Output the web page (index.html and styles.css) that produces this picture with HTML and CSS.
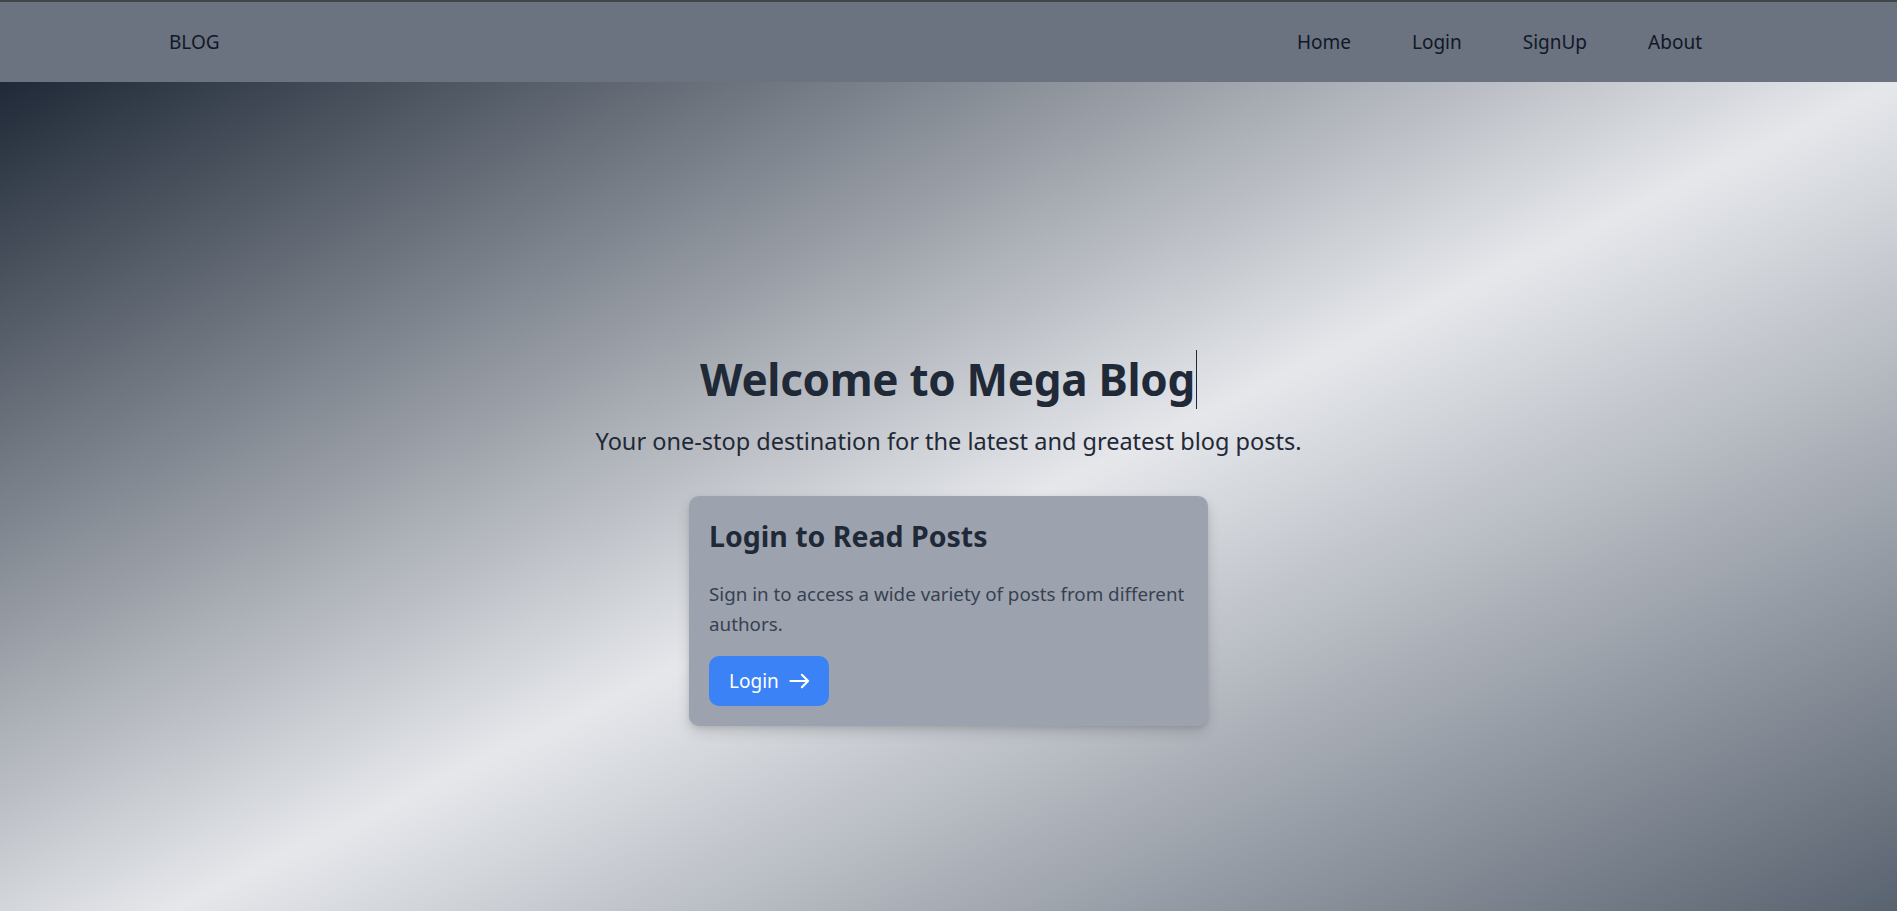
FILE: index.html
```html
<!DOCTYPE html>
<html lang="en">
<head>
<meta charset="utf-8">
<title>Mega Blog</title>
<link rel="stylesheet" href="styles.css">
</head>
<body>
<header class="nav">
  <a class="brand" href="#">BLOG</a>
  <ul class="links">
    <li><a href="#">Home</a></li>
    <li><a href="#">Login</a></li>
    <li><a href="#">SignUp</a></li>
    <li><a href="#">About</a></li>
  </ul>
</header>
<main class="hero">
  <h1 class="title"><span class="typed">Welcome to Mega Blog</span></h1>
  <p class="subtitle">Your one-stop destination for the latest and greatest blog posts.</p>
  <section class="card">
    <h2 class="card-title">Login to Read Posts</h2>
    <p class="card-text">Sign in to access a wide variety of posts from different authors.</p>
    <a class="btn" href="#">Login
      <svg class="arrow" viewBox="0 0 22 16" width="21" height="16" fill="none" stroke="currentColor" stroke-width="2.3" stroke-linecap="round" stroke-linejoin="round"><path d="M1.5 8H20M13.5 1.5 20 8l-6.5 6.5"/></svg>
    </a>
  </section>
</main>
</body>
</html>
```

FILE: styles.css
```css
* { box-sizing: border-box; }
html, body { margin: 0; padding: 0; }
body {
  font-family: "Noto Sans", "Open Sans", sans-serif;
  color: #1f2937;
  background: #e5e7eb;
}
a { text-decoration: none; color: inherit; }

.nav {
  height: 82px;
  border-top: 2px solid #444548;
  background: #6b7280;
  display: flex;
  align-items: center;
  justify-content: space-between;
  padding: 0 195px 0 169px;
  color: #111827;
  font-size: 19px;
}
.links {
  list-style: none;
  margin: 0;
  padding: 0;
  display: flex;
  gap: 61px;
}

.hero {
  min-height: 911px;
  background: linear-gradient(to bottom right, #1f2937, #e5e7eb 50%, #4b5563);
  display: flex;
  flex-direction: column;
  align-items: center;
  justify-content: center;
  padding: 0 16px;
}
.title {
  margin: 0;
  font-size: 44px;
  line-height: 59px;
  font-weight: 700;
  color: #1f2937;
  letter-spacing: -0.3px;
}
.typed {
  display: inline-block;
  border-right: 1px solid #1f2937;
  padding-right: 1px;
}
.subtitle {
  margin: 16px 0 39px;
  font-size: 23.5px;
  line-height: 32px;
  color: #1f2937;
}
.card {
  width: 519px;
  background: #9ca3af;
  border-radius: 10px;
  padding: 21px 20px 20px;
  box-shadow: 0 6px 14px rgba(0, 0, 0, 0.14), 0 2px 4px rgba(0, 0, 0, 0.08);
}
.card-title {
  margin: 0;
  font-size: 28.5px;
  line-height: 38px;
  font-weight: 700;
  color: #1f2937;
}
.card-text {
  margin: 24px 0 17px;
  font-size: 18.8px;
  line-height: 30px;
  color: #374151;
}
.btn {
  display: inline-flex;
  align-items: center;
  gap: 10px;
  height: 50px;
  padding: 0 19px 0 20px;
  background: #3b82f6;
  color: #ffffff;
  border-radius: 10px;
  font-size: 19px;
}
.arrow { display: block; }
```
